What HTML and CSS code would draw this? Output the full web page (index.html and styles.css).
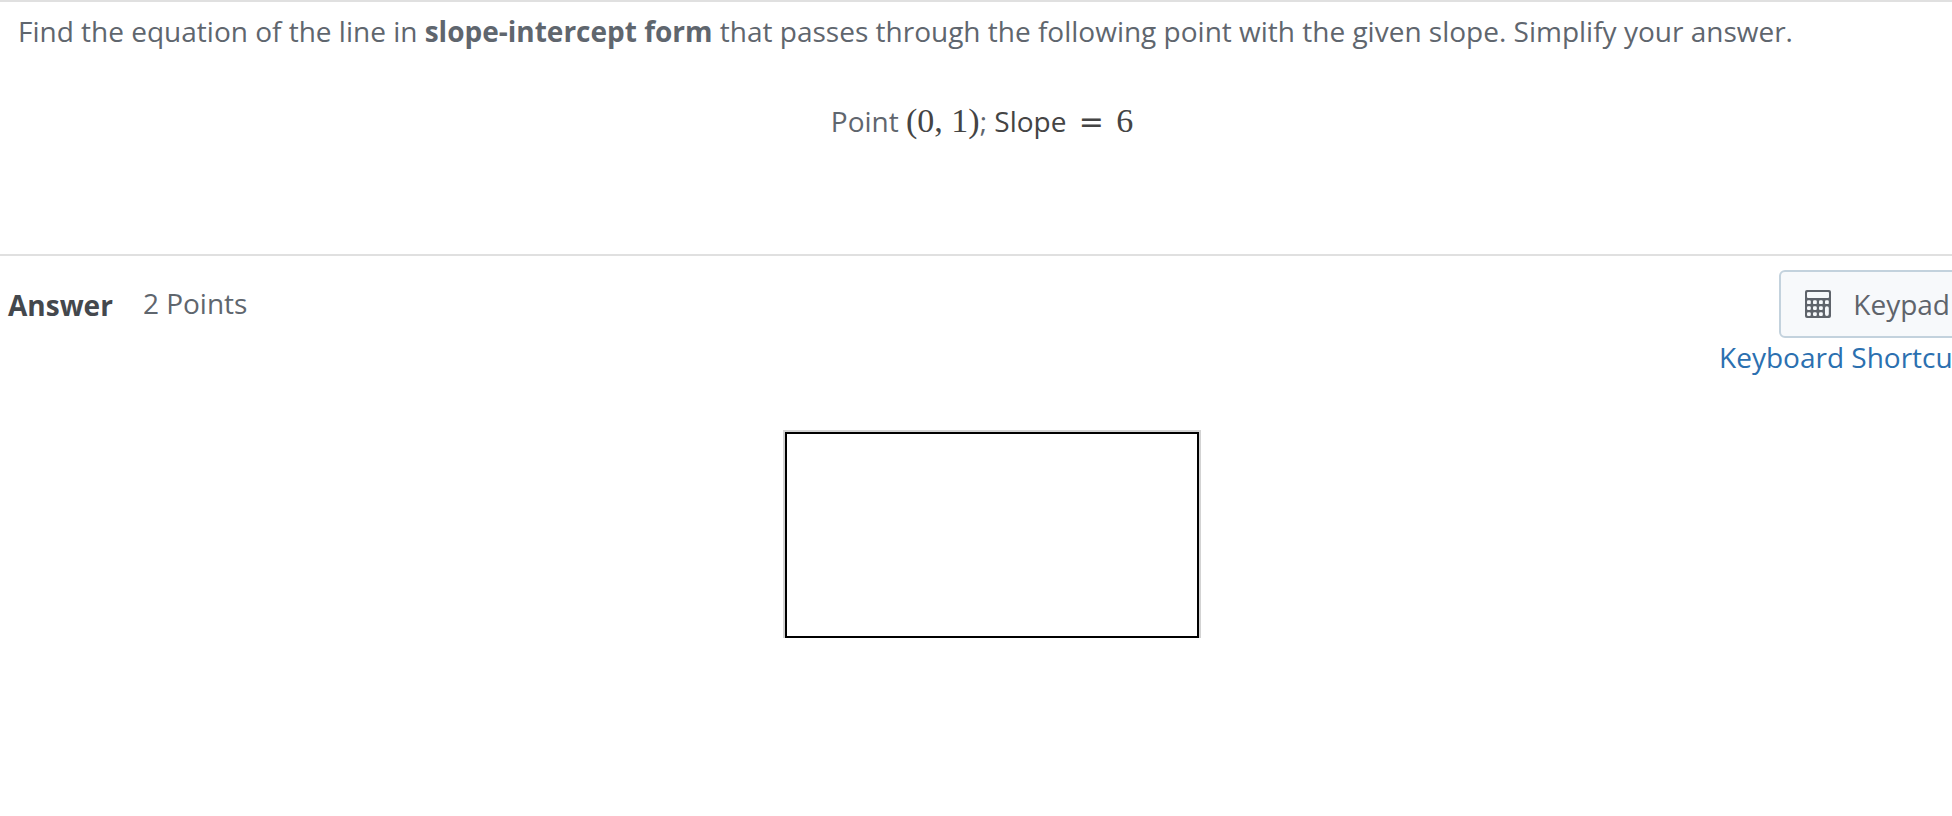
FILE: index.html
```html
<!DOCTYPE html>
<html lang="en">
<head>
    <meta charset="UTF-8">
    <meta name="viewport" content="width=device-width, initial-scale=1.0">
    <title>Slope-Intercept Form</title>
    <link rel="stylesheet" href="styles.css">
</head>
<body>
    <main>
        <section class="question">
            <p class="prompt">Find the equation of the line in <strong>slope-intercept form</strong> that passes through the following point with the given slope. Simplify your answer.</p>
            <p class="given">Point <span class="math">(0, 1)</span>; <span class="dark">Slope</span> <span class="math equals">=</span> <span class="math">6</span></p>
        </section>

        <section class="answer">
            <div class="answer-header">
                <h2 id="answerLabel">Answer</h2>
                <span class="points">2 Points</span>
                <div class="tools">
                    <button type="button" class="keypad">
                        <svg width="26" height="28" viewBox="0 0 26 28" aria-hidden="true">
                            <rect width="26" height="28" rx="2" fill="#5f646b"/>
                            <g fill="#f7f9fb">
                                <rect x="2" y="2" width="22" height="6" rx="1"/>
                                <rect x="2" y="10.3" width="3.8" height="3.8" rx="1.2"/>
                                <rect x="8" y="10.3" width="3.8" height="3.8" rx="1.2"/>
                                <rect x="14" y="10.3" width="3.8" height="3.8" rx="1.2"/>
                                <rect x="20" y="10.3" width="3.8" height="3.8" rx="1.2"/>
                                <rect x="2" y="16.2" width="3.8" height="3.8" rx="1.2"/>
                                <rect x="8" y="16.2" width="3.8" height="3.8" rx="1.2"/>
                                <rect x="14" y="16.2" width="3.8" height="3.8" rx="1.2"/>
                                <rect x="2" y="22.2" width="3.8" height="3.8" rx="1.2"/>
                                <rect x="8" y="22.2" width="3.8" height="3.8" rx="1.2"/>
                                <rect x="14" y="22.2" width="3.8" height="3.8" rx="1.2"/>
                                <rect x="20" y="16.2" width="3.8" height="9.8" rx="1.9"/>
                            </g>
                        </svg>
                        Keypad
                    </button>
                    <a href="#" class="shortcuts">Keyboard Shortcuts</a>
                </div>
            </div>
            <input type="text" class="answer-box" aria-labelledby="answerLabel">
        </section>
    </main>
</body>
</html>
```

FILE: styles.css
```css
body {
    margin: 0;
    font-family: "Open Sans", "Noto Sans", sans-serif;
    font-size: 28px;
    line-height: 38px;
    color: #5f666e;
    background-color: #fff;
    overflow-x: hidden;
}

.question {
    border-top: 2px solid #e0e0e0;
    border-bottom: 2px solid #e0e0e0;
    padding: 10px 18px 114px;
}

.prompt {
    margin: 0 0 52px;
}

.given {
    margin: 0 0 0 12px;
    text-align: center;
}

.math {
    font-family: "Liberation Serif", "Times New Roman", serif;
    font-size: 34px;
    line-height: 1;
    color: #444;
}

.equals {
    margin: 0 5px;
    font-family: "DejaVu Sans", sans-serif;
    font-size: 30px;
}

.dark {
    color: #444;
}

/* the answer panel runs past the right edge of the window */
.answer {
    margin-right: -24px;
    padding-left: 8px;
}

.answer-header {
    display: flex;
    align-items: flex-start;
    padding-top: 14px;
}

.answer-header h2 {
    margin: 16px 30px 0 0;
    font-size: 28px;
    font-weight: 700;
    line-height: 38px;
    color: #44484d;
}

.points {
    margin-top: 14px;
}

.tools {
    display: flex;
    flex-direction: column;
    align-items: flex-end;
    margin-left: auto;
    white-space: nowrap;
}

.keypad {
    display: flex;
    align-items: center;
    gap: 22px;
    padding: 13px 24px;
    border: 2px solid #c3d2dd;
    border-radius: 6px;
    background-color: #f7f9fb;
    font: inherit;
    color: #5f646b;
    cursor: pointer;
}

.shortcuts {
    color: #2b70b0;
    text-decoration: none;
}

.answer-box {
    display: block;
    box-sizing: border-box;
    width: 414px;
    height: 206px;
    margin: 56px auto 0;
    padding: 12px;
    border: 2px solid #000;
    border-radius: 0;
    outline: 2px solid #d3d3d3;
    font: inherit;
}
```
